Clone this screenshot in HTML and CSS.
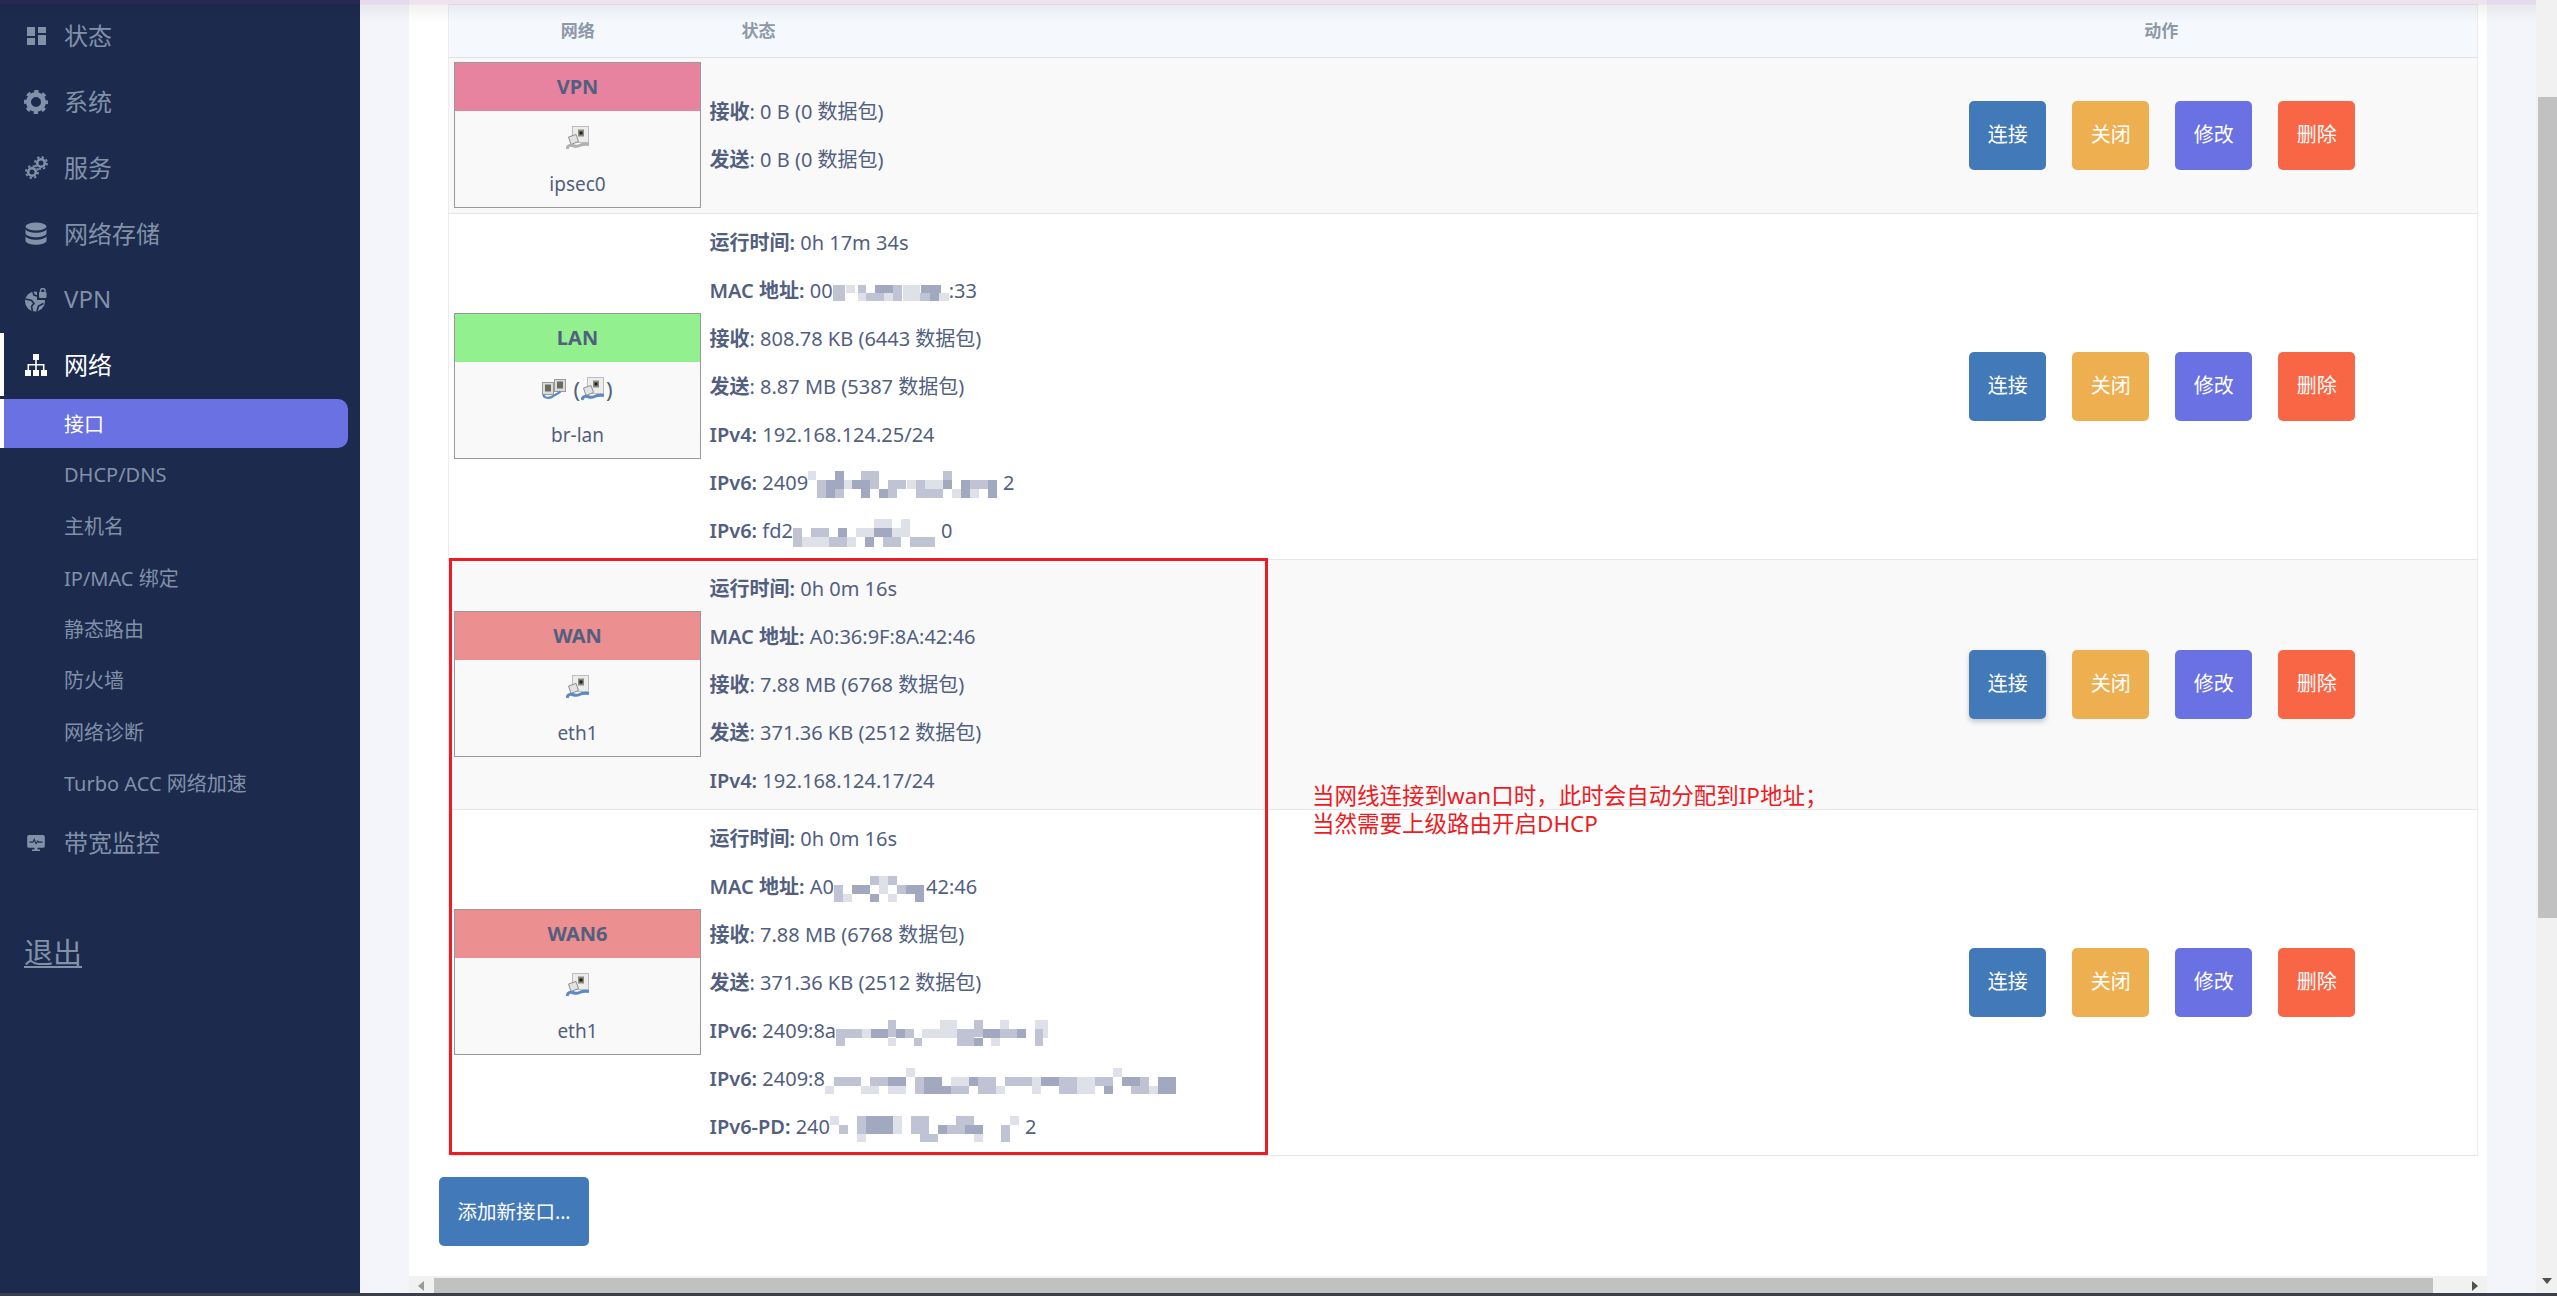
FILE: index.html
```html
<!DOCTYPE html>
<html lang="zh-CN">
<head>
    <meta charset="UTF-8">
    <title>接口 - 网络</title>
    <link rel="stylesheet" href="styles.css">
</head>
<body>
    <svg class="defs" width="0" height="0">
        <symbol id="port" viewBox="0 0 24 24">
            <rect x="6.500" y="0.500" width="16" height="16" fill="#ececec" stroke="#bdbdbd"/>
            <rect x="12" y="3.500" width="6" height="7" fill="#8a8a78"/>
            <rect x="13.500" y="5.500" width="3" height="3" fill="#1e1e1e"/>
            <path d="M2.500 11l7.500-2.500 2.500 7-7.500 3z" fill="#e2e2e2" stroke="#8f8f8f"/>
            <path d="M1 23c.5-3 3-4.500 5.500-3.500s5 1 7 0 5-1.500 9.500-1" fill="none" stroke="currentColor" stroke-width="3"/>
        </symbol>
        <symbol id="bridge" viewBox="0 0 24 20">
            <rect x="0.500" y="3.500" width="11" height="12" fill="#dcdcdc" stroke="#999"/>
            <rect x="12.500" y="0.500" width="11" height="12" fill="#dcdcdc" stroke="#999"/>
            <rect x="3" y="5.500" width="6" height="7" fill="#6b6b5c"/>
            <rect x="15" y="2.500" width="6" height="7" fill="#6b6b5c"/>
            <path d="M1.500 15.500c0 4 6 4 9 2s6-3 8-5" fill="none" stroke="#5b8ac6" stroke-width="2.200"/>
        </symbol>
    </svg>

    <div class="app">
        <nav class="sidebar">
            <a class="menu-item">
                <svg class="menu-icon" viewBox="0 0 24 24"><path d="M3 3h8v9H3zM14 3h8v6h-8zM3 14h8v7H3zM14 11h8v10h-8z"/></svg>
                <span>状态</span>
            </a>
            <a class="menu-item">
                <svg class="menu-icon" viewBox="0 0 24 24"><circle cx="12" cy="12" r="7.500" fill="none" stroke="currentColor" stroke-width="5"/><circle cx="12" cy="12" r="10.500" fill="none" stroke="currentColor" stroke-width="3" stroke-dasharray="4.250 4" stroke-dashoffset="2.120"/></svg>
                <span>系统</span>
            </a>
            <a class="menu-item">
                <svg class="menu-icon" viewBox="0 0 24 24">
                    <circle cx="8" cy="16" r="3.800" fill="none" stroke="currentColor" stroke-width="2.600"/>
                    <circle cx="8" cy="16" r="6" fill="none" stroke="currentColor" stroke-width="1.800" stroke-dasharray="2.400 2.300"/>
                    <circle cx="17" cy="7" r="3.800" fill="none" stroke="currentColor" stroke-width="2.600"/>
                    <circle cx="17" cy="7" r="6" fill="none" stroke="currentColor" stroke-width="1.800" stroke-dasharray="2.400 2.300"/>
                </svg>
                <span>服务</span>
            </a>
            <a class="menu-item">
                <svg class="menu-icon" viewBox="0 0 24 24"><ellipse cx="12" cy="4.500" rx="10.500" ry="4"/><path d="M1.500 7c2 5 19 5 21 0v4.500c-2 5-19 5-21 0zM1.500 14c2 5 19 5 21 0v5c-2 5-19 5-21 0z"/></svg>
                <span>网络存储</span>
            </a>
            <a class="menu-item">
                <svg class="menu-icon" viewBox="0 0 24 24">
                    <circle cx="11" cy="13.500" r="10"/>
                    <path class="cut" d="M13 0h11v12H13z"/>
                    <path class="cut-line" d="M1.500 11l6 1.500 2.500 3-2.500 3 1 5M13 23l1.500-5 5-2.500M9 4l1 3 3 1"/>
                    <path d="M16.500 4V2.800a2.300 2.300 0 0 1 4.600 0V4" fill="none" stroke="currentColor" stroke-width="1.400"/>
                    <rect x="15" y="4" width="7.500" height="6" rx="1"/>
                </svg>
                <span>VPN</span>
            </a>
            <a class="menu-item active">
                <svg class="menu-icon" viewBox="0 0 24 24"><path d="M9 1h6v6H9zM1 17h6v6H1zM9 17h6v6H9zM17 17h6v6h-6zM11.200 7h1.600v4H20.500v6h-1.600v-4.400h-6.100V17h-1.600v-4.400H5.100V17H3.500v-6h7.700z"/></svg>
                <span>网络</span>
            </a>
            <div class="submenu">
                <a class="sub-item current">接口</a>
                <a class="sub-item">DHCP/DNS</a>
                <a class="sub-item">主机名</a>
                <a class="sub-item">IP/MAC 绑定</a>
                <a class="sub-item">静态路由</a>
                <a class="sub-item">防火墙</a>
                <a class="sub-item">网络诊断</a>
                <a class="sub-item">Turbo ACC 网络加速</a>
            </div>
            <a class="menu-item">
                <svg class="menu-icon" viewBox="-3 -3 30 30"><path fill-rule="evenodd" d="M3 2h18a2 2 0 0 1 2 2v12a2 2 0 0 1-2 2h-7v2h3v2H7v-2h3v-2H3a2 2 0 0 1-2-2V4a2 2 0 0 1 2-2zM4 10.200v1.600h4.500l1.200-2.500 2.300 5 2-3.500 .8.9H20v-1.500h-4.500l-1.400-2-1.800 3.200-2.600-5.500-1.800 4.300z"/></svg>
                <span>带宽监控</span>
            </a>
            <a class="logout">退出</a>
        </nav>

        <main class="main">
            <div class="card">
                <table class="iface-table">
                    <thead>
                        <tr>
                            <th class="col-net">网络</th>
                            <th class="col-status">状态</th>
                            <th class="col-action">动作</th>
                        </tr>
                    </thead>
                    <tbody>
                        <tr class="odd">
                            <td class="cell-net">
                                <div class="tile">
                                    <div class="tile-head vpn">VPN</div>
                                    <div class="tile-body">
                                        <svg class="port gray"><use href="#port"/></svg>
                                        <div class="tile-name">ipsec0</div>
                                    </div>
                                </div>
                            </td>
                            <td class="cell-status">
                                <div><b>接收</b>: 0 B (0 数据包)</div>
                                <div><b>发送</b>: 0 B (0 数据包)</div>
                            </td>
                            <td class="cell-action">
                                <div class="actions">
                                    <a class="btn blue">连接</a>
                                    <a class="btn orange">关闭</a>
                                    <a class="btn purple">修改</a>
                                    <a class="btn red">删除</a>
                                </div>
                            </td>
                        </tr>
                        <tr>
                            <td class="cell-net">
                                <div class="tile">
                                    <div class="tile-head lan">LAN</div>
                                    <div class="tile-body">
                                        <div class="tile-icons">
                                            <svg class="bridge"><use href="#bridge"/></svg>
                                            <span>(</span><svg class="port blue-cable"><use href="#port"/></svg><span>)</span>
                                        </div>
                                        <div class="tile-name">br-lan</div>
                                    </div>
                                </div>
                            </td>
                            <td class="cell-status">
                                <div><b>运行时间:</b> 0h 17m 34s</div>
                                <div><b>MAC 地址:</b> 00<svg class="mosaic" width="116" height="16"><path class="m2" d="M0 0h12v16H0zM25 0h8v8h-8zM33 8h9v8h-9zM42 8h9v8h-9zM60 0h9v16h-9zM87 8h10v8H87z"/><path class="m1" d="M13 0h9v8h-9zM25 8h8v8h-8zM70 0h17v16H70zM106 8h10v8h-10zM51 8h9v8h-9z"/><path class="m3" d="M42 0h18v8H42zM88 0h20v8H88zM97 8h9v8h-9z"/></svg>:33</div>
                                <div><b>接收</b>: 808.78 KB (6443 数据包)</div>
                                <div><b>发送</b>: 8.87 MB (5387 数据包)</div>
                                <div><b>IPv4:</b> 192.168.124.25/24</div>
                                <div><b>IPv6:</b> 2409<svg class="mosaic" width="195" height="27"><path class="m1" d="M0 0h8v9H0zM35 9h9v9h-9zM99 9h9v9h-9zM117 9h27v9h-27zM144 18h9v9h-9zM162 18h9v9h-9z"/><path class="m2" d="M9 9h9v18H9zM53 0h18v9H53zM62 9h9v9h-9zM80 9h18v9H80zM108 9h9v18h-9zM135 0h9v9h-9zM162 9h18v9h-18zM27 18h9v9h-9zM80 18h9v9h-9zM117 18h18v9h-18z"/><path class="m3" d="M27 0h9v18h-9zM44 9h9v9h-9zM53 9h9v18h-9zM71 18h9v9h-9zM153 9h9v18h-9zM180 9h9v18h-9zM18 9h9v18h-9zM135 9h9v9h-9z"/></svg>2</div>
                                <div><b>IPv6:</b> fd2<svg class="mosaic" width="148" height="28"><path class="m2" d="M0 9h9v19H0zM18 9h18v9H18zM45 9h9v19h-9zM72 18h9v10h-9zM90 18h18v10H90zM117 18h25v10h-25zM36 18h9v10h-9z"/><path class="m1" d="M9 18h27v10H9zM63 9h18v9H63zM108 0h9v9h-9zM99 9h18v9H99zM81 0h18v9H81zM54 18h9v10h-9z"/><path class="m3" d="M45 9h9v9h-9zM81 9h18v9H81zM72 18h9v10h-9z"/></svg>0</div>
                            </td>
                            <td class="cell-action">
                                <div class="actions">
                                    <a class="btn blue">连接</a>
                                    <a class="btn orange">关闭</a>
                                    <a class="btn purple">修改</a>
                                    <a class="btn red">删除</a>
                                </div>
                            </td>
                        </tr>
                        <tr class="odd">
                            <td class="cell-net">
                                <div class="tile">
                                    <div class="tile-head wan">WAN</div>
                                    <div class="tile-body">
                                        <svg class="port blue-cable"><use href="#port"/></svg>
                                        <div class="tile-name">eth1</div>
                                    </div>
                                </div>
                            </td>
                            <td class="cell-status">
                                <div><b>运行时间:</b> 0h 0m 16s</div>
                                <div><b>MAC 地址:</b> A0:36:9F:8A:42:46</div>
                                <div><b>接收</b>: 7.88 MB (6768 数据包)</div>
                                <div><b>发送</b>: 371.36 KB (2512 数据包)</div>
                                <div><b>IPv4:</b> 192.168.124.17/24</div>
                            </td>
                            <td class="cell-action">
                                <div class="actions">
                                    <a class="btn blue raised">连接</a>
                                    <a class="btn orange">关闭</a>
                                    <a class="btn purple">修改</a>
                                    <a class="btn red">删除</a>
                                </div>
                            </td>
                        </tr>
                        <tr>
                            <td class="cell-net">
                                <div class="tile">
                                    <div class="tile-head wan">WAN6</div>
                                    <div class="tile-body">
                                        <svg class="port blue-cable"><use href="#port"/></svg>
                                        <div class="tile-name">eth1</div>
                                    </div>
                                </div>
                            </td>
                            <td class="cell-status">
                                <div><b>运行时间:</b> 0h 0m 16s</div>
                                <div><b>MAC 地址:</b> A0<svg class="mosaic" width="92" height="26"><path class="m2" d="M0 9h9v17H0zM36 0h9v9h-9zM63 9h9v9h-9zM54 0h9v9h-9z"/><path class="m3" d="M18 9h18v9H18zM36 18h9v8h-9zM72 9h9v9h-9zM81 9h9v17h-9z"/><path class="m1" d="M9 18h9v8H9zM45 0h9v18h-9zM54 18h9v8h-9z"/></svg>42:46</div>
                                <div><b>接收</b>: 7.88 MB (6768 数据包)</div>
                                <div><b>发送</b>: 371.36 KB (2512 数据包)</div>
                                <div><b>IPv6:</b> 2409:8a<svg class="mosaic" width="212" height="26" viewBox="0 0 221 26" preserveAspectRatio="none"><path class="m2" d="M0 9h9v17H0zM9 9h18v9H9zM54 0h9v17h-9zM72 9h9v9h-9zM81 18h9v8h-9zM126 9h18v17h-18zM171 9h18v9h-18zM144 0h9v17h-9zM207 9h9v17h-9z"/><path class="m1" d="M27 9h9v9h-9zM54 18h9v8h-9zM90 9h18v9H90zM108 0h18v18h-18zM171 0h9v9h-9zM207 0h14v9h-14zM162 18h9v8h-9zM216 9h5v9h-5z"/><path class="m3" d="M36 9h18v9H36zM63 9h9v9h-9zM153 9h18v9h-18zM189 9h9v9h-9zM144 18h9v8h-9z"/></svg></div>
                                <div><b>IPv6:</b> 2409:8<svg class="mosaic" width="355" height="26"><path class="m2" d="M9 9h27v9H9zM45 9h18v9H45zM90 9h18v17H90zM126 18h18v8h-18zM153 9h18v17h-18zM180 9h27v9h-27zM234 9h18v17h-18zM270 9h18v9h-18zM306 9h18v17h-18z"/><path class="m1" d="M0 18h9v8H0zM36 18h18v8H36zM81 0h9v9h-9zM126 9h18v9h-18zM171 18h9v8h-9zM207 9h9v17h-9zM252 9h18v17h-18zM288 0h9v9h-9zM324 18h27v8h-27zM63 18h18v8H63z"/><path class="m3" d="M63 9h18v9H63zM99 9h18v9H99zM144 9h9v9h-9zM216 9h18v9h-18zM279 18h9v8h-9zM297 9h18v9h-18zM333 9h18v17h-18zM99 18h27v8H99z"/></svg></div>
                                <div><b>IPv6-PD:</b> 240<svg class="mosaic" width="195" height="26"><path class="m1" d="M0 0h9v9H0zM180 0h9v9h-9zM63 0h9v18h-9zM144 18h9v8h-9zM27 18h9v8h-9z"/><path class="m2" d="M9 9h9v9H9zM27 0h9v18h-9zM81 0h18v18H81zM117 9h18v9h-18zM171 9h9v17h-9zM126 0h18v9h-18zM90 18h18v8H90z"/><path class="m3" d="M36 0h27v18H36zM108 9h9v9h-9zM135 9h18v9h-18z"/></svg>2</div>
                            </td>
                            <td class="cell-action">
                                <div class="actions">
                                    <a class="btn blue">连接</a>
                                    <a class="btn orange">关闭</a>
                                    <a class="btn purple">修改</a>
                                    <a class="btn red">删除</a>
                                </div>
                            </td>
                        </tr>
                    </tbody>
                </table>
                <a class="btn blue add-btn">添加新接口...</a>
            </div>
            <div class="hscroll">
                <span class="arrow-left"></span>
                <div class="hscroll-thumb"></div>
                <span class="arrow-right"></span>
            </div>
        </main>

        <div class="vscroll">
            <div class="vscroll-thumb"></div>
            <span class="arrow-down"></span>
        </div>

        <!-- annotation drawn on top of the screenshot -->
        <div class="mark-box"></div>
        <div class="mark-note">当网线连接到wan口时，此时会自动分配到IP地址；<br>当然需要上级路由开启DHCP</div>
        <div class="top-glow"></div>
    </div>
    <div class="bottom-line"></div>
</body>
</html>
```

FILE: styles.css
```css
* {
    box-sizing: border-box;
}

html, body {
    height: 100%;
}

body {
    margin: 0;
    display: flex;
    flex-direction: column;
    overflow: hidden;
    font-family: "Noto Sans", "Noto Sans CJK SC", sans-serif;
    font-size: 20px;
    color: #525f7f;
    background-color: #f4f5fb;
}

.defs {
    position: absolute;
}

.app {
    flex: 1;
    display: flex;
    position: relative;
    min-height: 0;
}

.bottom-line {
    height: 3px;
    background-color: #3a3f4a;
}

/* Sidebar */
.sidebar {
    width: 360px;
    flex-shrink: 0;
    padding-top: 3px;
    background-color: #1c2a4e;
    color: #8191a8;
}

.menu-item {
    display: flex;
    align-items: center;
    height: 66px;
    padding-left: 24px;
    font-size: 24px;
}

.menu-item span {
    padding-bottom: 3px;
}

.menu-item.active {
    color: #fff;
    box-shadow: inset 4px 0 0 #fff;
    height: 63px;
    margin-bottom: 3px;
}

.menu-icon {
    width: 24px;
    height: 24px;
    margin-right: 16px;
    fill: currentColor;
}

.cut {
    fill: #1c2a4e;
}

.cut-line {
    fill: none;
    stroke: #1c2a4e;
    stroke-width: 1.600;
}

.submenu {
    display: flex;
    flex-direction: column;
}

.sub-item {
    display: flex;
    align-items: center;
    height: 49px;
    margin-bottom: 2.400px;
    margin-right: 12px;
    padding-left: 64px;
    padding-bottom: 1px;
    border-radius: 0 10px 10px 0;
}

.sub-item.current {
    color: #fff;
    background-color: #6a72e3;
    box-shadow: inset 4px 0 0 #fff;
}

.logout {
    display: block;
    margin: 54px 0 0 24px;
    font-size: 29px;
    text-decoration: underline;
}

/* Main area */
.main {
    flex: 1;
    display: flex;
    flex-direction: column;
    min-width: 0;
    padding: 0 49px;
}

.card {
    flex: 1;
    padding: 4px 9px 0 30px;
    background-color: #fff;
}

.iface-table {
    width: 2030px;
    margin-left: 9px;
    border-collapse: collapse;
    table-layout: fixed;
    border: 1px solid #ececf0;
}

.iface-table th {
    height: 53px;
    padding: 0 0 3px;
    font-size: 17px;
    font-weight: 700;
    color: #8d99aa;
    background-color: #f5f8fc;
    border-bottom: 1px solid #e2e2e6;
}

.col-net {
    width: 258px;
}

.col-action {
    width: 632px;
}

.iface-table th.col-status {
    padding-left: 35px;
    text-align: left;
}

.iface-table td {
    padding: 4px 0 5px;
    border-bottom: 1px solid #e6e6e6;
    vertical-align: middle;
}

.odd td {
    background-color: #f9f9f9;
}

.iface-table td.cell-net {
    padding-left: 5px;
}

.iface-table td.cell-status {
    padding-left: 3px;
}

.iface-table td.cell-action {
    padding-left: 2px;
}

.cell-status > div {
    height: 48px;
    line-height: 50px;
    white-space: nowrap;
}

.cell-status b {
    font-weight: 600;
}

.mosaic {
    vertical-align: middle;
    shape-rendering: crispEdges;
}

.m1 {
    fill: #dfe1e9;
}

.m2 {
    fill: #bfc3d3;
}

.m3 {
    fill: #a2a8bf;
}

.tile {
    width: 247px;
    height: 146px;
    border: 1px solid #999;
    background-color: #f9f9f9;
    text-align: center;
}

.tile-head {
    height: 48px;
    line-height: 48px;
    font-weight: 700;
}

.vpn {
    background-color: #e8839f;
}

.lan {
    background-color: #92f08f;
}

.wan {
    background-color: #ec8f90;
}

.tile-body {
    display: flex;
    flex-direction: column;
    align-items: center;
}

.port {
    width: 24px;
    height: 24px;
    margin-top: 15px;
    display: block;
}

.gray {
    color: #b0b0b0;
}

.blue-cable {
    color: #5b8ac6;
}

.tile-icons {
    display: flex;
    align-items: center;
    justify-content: center;
    gap: 1px;
    height: 24px;
    margin-top: 15px;
    font-size: 22px;
}

.tile-icons .port {
    margin-top: 0;
}

.bridge {
    width: 24px;
    height: 20px;
    margin-right: 6px;
}

.tile-name {
    margin-top: 20px;
    line-height: 28px;
    font-size: 19px;
}

.actions {
    display: flex;
    justify-content: center;
    gap: 26px;
}

.btn {
    display: flex;
    align-items: center;
    justify-content: center;
    width: 77px;
    height: 69px;
    padding-bottom: 3px;
    border-radius: 5px;
    color: #fff;
}

.btn.blue {
    background-color: #4279b8;
}

.btn.orange {
    background-color: #edaf50;
}

.btn.purple {
    background-color: #6a72e3;
}

.btn.red {
    background-color: #f96645;
}

.btn.raised {
    box-shadow: 0 3px 5px rgba(50, 50, 93, 0.25);
}

.add-btn {
    width: 150px;
    margin-top: 21px;
    font-size: 19.500px;
}

/* Scrollbars */
.hscroll {
    display: flex;
    align-items: center;
    height: 17px;
    padding-top: 2px;
    background-color: #f1f1f1;
    position: relative;
}

.hscroll-thumb {
    height: 15px;
    width: 1999px;
    margin-left: 25px;
    background-color: #c1c1c1;
}

.arrow-left, .arrow-right {
    position: absolute;
    top: 5px;
    border-top: 5px solid transparent;
    border-bottom: 5px solid transparent;
}

.arrow-left {
    left: 9px;
    border-right: 6px solid #999;
}

.arrow-right {
    right: 9px;
    border-left: 6px solid #505050;
}

.vscroll {
    width: 21px;
    flex-shrink: 0;
    position: relative;
    padding: 97px 0 0 2px;
    background-color: #f1f1f1;
}

.vscroll-thumb {
    height: 821px;
    background-color: #c1c1c1;
}

.arrow-down {
    position: absolute;
    left: 6px;
    top: 1278px;
    border-left: 5px solid transparent;
    border-right: 5px solid transparent;
    border-top: 6px solid #505050;
}

/* Annotation over the page */
.mark-box {
    position: absolute;
    left: 449px;
    top: 558px;
    width: 819px;
    height: 597px;
    border: 3px solid #ed1c24;
}

.mark-note {
    position: absolute;
    left: 1312px;
    top: 782px;
    font-size: 22.500px;
    line-height: 28px;
    color: #ed1c24;
}

.top-glow {
    position: absolute;
    left: 0;
    top: 0;
    width: 2536px;
    height: 22px;
    background: linear-gradient(rgba(125, 20, 125, 0.12) 0, rgba(125, 20, 125, 0.12) 4px, rgba(0, 0, 0, 0.05) 5px, rgba(0, 0, 0, 0) 22px);
}
```
